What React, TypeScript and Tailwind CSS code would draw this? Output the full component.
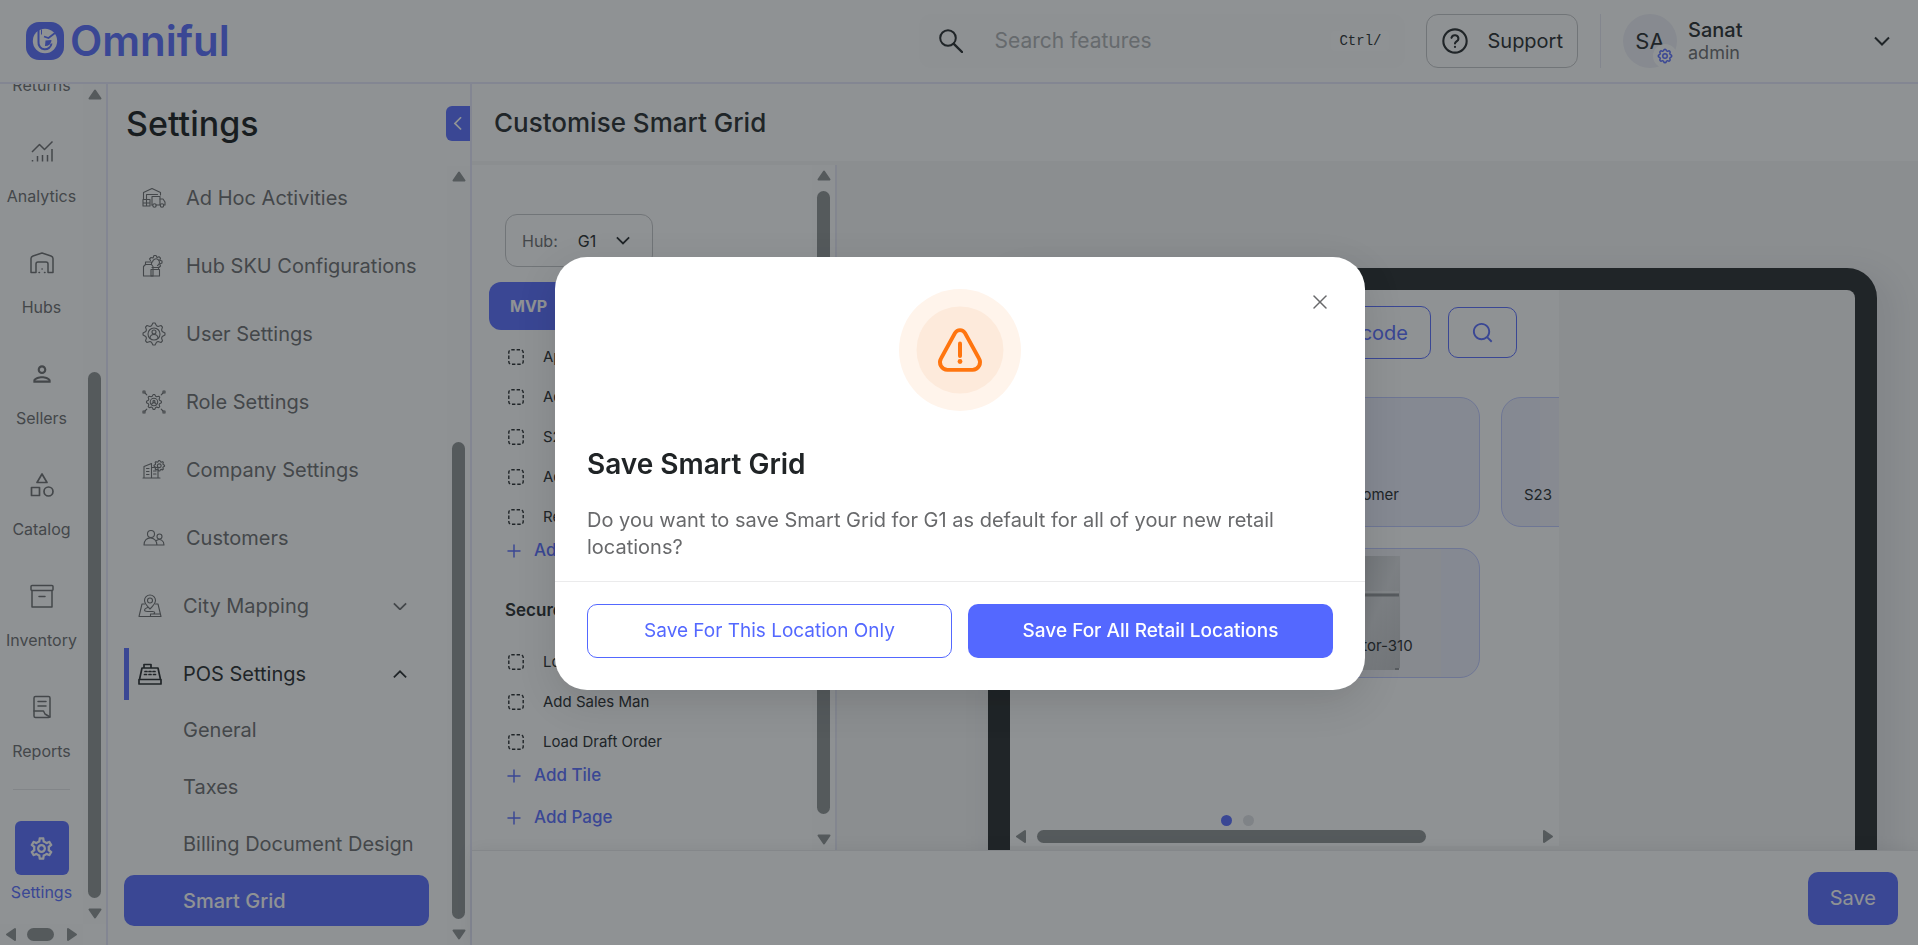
import React, { useState } from 'react';
import clsx from 'clsx';
import { FiX } from 'react-icons/fi';
import { MdOutlinePerson, MdOutlineSettings } from 'react-icons/md';
import { RiSearchLine } from 'react-icons/ri';
import { TbSettings } from 'react-icons/tb';

type IconProps = { className?: string };

const Svg: React.FC<IconProps & { children: React.ReactNode; width?: number }> = ({ className, children, width = 1.5 }) => (
  <svg
    viewBox="0 0 24 24"
    fill="none"
    stroke="currentColor"
    strokeWidth={width}
    strokeLinecap="round"
    strokeLinejoin="round"
    className={clsx('shrink-0', className)}
    aria-hidden="true"
  >
    {children}
  </svg>
);

const ChevronIcon: React.FC<IconProps> = ({ className }) => (
  <svg viewBox="0 0 16 10" fill="none" stroke="currentColor" strokeWidth="2" className={clsx('shrink-0', className)} aria-hidden="true">
    <path d="M1 1.5l7 7 7-7" />
  </svg>
);

/* toothed outline used by the small settings drawings */
const GEAR = Array.from({ length: 32 }, (_, i) => {
  const r = i % 4 < 2 ? 11 : 8.6;
  const a = ((i - 0.5) / 32) * Math.PI * 2 - Math.PI / 2;
  return `${(12 + r * Math.cos(a)).toFixed(2)},${(12 + r * Math.sin(a)).toFixed(2)}`;
}).join(' ');

const AnalyticsIcon: React.FC<IconProps> = (props) => (
  <Svg {...props}>
    <path d="M2 12l7.500-7.500 5 5L22.500 1.500" strokeLinecap="butt" />
    <path d="M2.500 20v1.500M7.500 16v5.500M12.500 15v6.500M17.500 15v6.500M22 9v12.500" strokeLinecap="butt" />
  </Svg>
);

const HubsIcon: React.FC<IconProps> = (props) => (
  <Svg {...props}>
    <path d="M1 21.500V7.500c0-1.500.8-2 2-2.500l9-3 9 3c1.200.5 2 1 2 2.500v14h-5V13a2 2 0 0 0-2-2H8a2 2 0 0 0-2 2v8.500z" />
    <path d="M9 21.500h.5M12 18h.2M14.500 21.500h.5" />
  </Svg>
);

const CatalogIcon: React.FC<IconProps> = (props) => (
  <Svg {...props} width={1.7}>
    <path d="M12 1L7 9.500h10z" />
    <rect x="1.500" y="14.500" width="8" height="8" />
    <circle cx="18.500" cy="18.500" r="4.500" />
  </Svg>
);

const InventoryIcon: React.FC<IconProps> = (props) => (
  <Svg {...props}>
    <rect x="1" y="1.500" width="22" height="5" rx="1" />
    <path d="M2 6.500V23h20V6.500M9 12.500h6" />
  </Svg>
);

const ReportsIcon: React.FC<IconProps> = (props) => (
  <Svg {...props}>
    <rect x="4" y="1.500" width="16" height="21" rx="1.500" />
    <path d="M8 6.500h8M8 11h8M4 16h9.500l1.500 3 5 3" />
  </Svg>
);

const AdHocIcon: React.FC<IconProps> = (props) => (
  <Svg {...props} width={1.1}>
    <path d="M1.500 13V6.500L10 2.500l8.500 4V9M4.500 13V8.500h11" />
    <path d="M1 13.500h7V20H1zM1 17h7M4.500 13.500V20M10 10.500h8v8.500h-4M10 10.500V19" />
    <path d="M18 13h3l2 3v3h-1.500M10 19h.5" />
    <circle cx="12.500" cy="19.500" r="1.700" />
    <circle cx="20" cy="19.500" r="1.700" />
  </Svg>
);

const HubSkuIcon: React.FC<IconProps> = (props) => (
  <Svg {...props} width={1.1}>
    <path d="M3.500 8h6v2.500l1.500 2V22H1.500V12.500l2-2zM3.500 10.500h6" />
    <path d="M9 15.500h8.500V22H9zM10 13.500h6.500v2" />
    <path d="M8.500 6.500l-1-1.500 1.500-1.500 2 .5 1-2.500h2l1 2 2-.8 1.500 1.500-.8 2 2.300.8v2l-2.300 1 .8 2-1.500 1.500-1-.3" />
    <path d="M10.500 8a3.500 3.500 0 1 1 5 3.500" />
  </Svg>
);

const UserSettingsIcon: React.FC<IconProps> = (props) => (
  <Svg {...props} width={1.1}>
    <polygon points={GEAR} />
    <circle cx="12" cy="12" r="6" />
    <circle cx="12" cy="10" r="2" />
    <path d="M8 16.300c.3-5 7.700-5 8 0" />
  </Svg>
);

const RoleSettingsIcon: React.FC<IconProps> = (props) => (
  <Svg {...props} width={1.1}>
    <g transform="translate(3.800 3.800) scale(.68)" strokeWidth="1.600">
      <polygon points={GEAR} />
      <circle cx="12" cy="12" r="5.500" />
      <circle cx="12" cy="11" r="1.500" />
      <path d="M8.500 16c.3-4 6.700-4 7 0" />
    </g>
    <path d="M3 3l1.800 1.800M21 3l-1.800 1.800M3 21l1.800-1.800M21 21l-1.800-1.800" />
    <path d="M1 1h2v2H1zM21 1h2v2h-2zM1 21h2v2H1zM21 21h2v2h-2z" />
  </Svg>
);

const CompanyIcon: React.FC<IconProps> = (props) => (
  <Svg {...props} width={1.1}>
    <path d="M1 20h17M2 20V8.500l7.500-3V20M9.500 9.500H16V20" />
    <path d="M4.500 10.500h2.500M4.500 13.500h2.500M4.500 16.500h2.500M11.500 13h2.500M11.500 16h2.500" />
    <g transform="translate(11.500 2) scale(.48)" strokeWidth="2.400">
      <polygon points={GEAR} />
      <circle cx="12" cy="12" r="4" />
    </g>
  </Svg>
);

const CustomersIcon: React.FC<IconProps> = (props) => (
  <Svg {...props} width={1.1}>
    <circle cx="9" cy="8" r="3.500" />
    <circle cx="17.500" cy="10.500" r="2.500" />
    <path d="M2 19c0-9.500 12.500-9.500 13 0zM14.500 14.500c3.500-2.500 7.500 0 7.500 4.500h-7" />
  </Svg>
);

const CityMappingIcon: React.FC<IconProps> = (props) => (
  <Svg {...props} width={1.1}>
    <path d="M12 15c-3.500-3.500-5.500-6-5.500-8.500a5.500 5.500 0 0 1 11 0c0 2.500-2 5-5.500 8.500z" />
    <circle cx="12" cy="6.500" r="2.500" />
    <path d="M6.500 10H4L1 22.500h22L20 10h-2.500M9.500 13.500c-4 1.500-4 4 0 4h5c3 0 3 2.500 0 2.500h-2v2.500M16 20h6" />
  </Svg>
);

const PosIcon: React.FC<IconProps> = (props) => (
  <Svg {...props} width={1.7}>
    <path d="M1 17.500h22V22H1zM1.500 17.500L4 6h16l2.500 11.500M6 6V2.500h7V6" />
    <path d="M7 9.500h2M11 9.500h2M15 9.500h2M6.500 12.500h2M11 12.500h2M15.500 12.500h2" />
  </Svg>
);

const TileIcon: React.FC = () => (
  <svg viewBox="0 0 16 16" fill="none" stroke="currentColor" strokeWidth="1.400" className="size-4 shrink-0" aria-hidden="true">
    <rect x=".8" y=".8" width="14.400" height="14.400" rx="2.500" strokeDasharray="3.400 1.900" />
  </svg>
);

const LogoMark: React.FC = () => (
  <svg viewBox="0 0 38 38" className="size-[38px]" aria-hidden="true">
    <rect width="38" height="38" rx="13" fill="#5468ff" />
    <circle cx="19" cy="19" r="12.200" fill="#fff" />
    <path d="M12.500 8v12a6.500 6.500 0 0 0 13 1.500" fill="none" stroke="#5468ff" strokeWidth="2" />
    <path d="M18 14.500l4.500 1.500 6.500-5" fill="none" stroke="#5468ff" strokeWidth="1.800" />
    <path d="M19.500 18.500l6-.5a6 6 0 0 1-6.500 6z" fill="#5468ff" />
    <path d="M15.500 7.500v5" stroke="#5468ff" strokeWidth="1" />
  </svg>
);

const Arrow: React.FC<IconProps> = ({ className }) => (
  <svg viewBox="0 0 14 11" fill="#8a8e8f" stroke="#8a8e8f" strokeWidth="2" strokeLinejoin="round" className={clsx('h-[11px] w-3.5 shrink-0', className)} aria-hidden="true">
    <path d="M7 1.500L12.500 9.500h-11z" />
  </svg>
);

const VerticalScrollbar: React.FC<{ thumb: string }> = ({ thumb }) => (
  <div className="flex w-[23px] shrink-0 flex-col items-center bg-[#fdfdfd] py-[5px]" aria-hidden="true">
    <Arrow />
    <div className={clsx('w-[13px] flex-1 rounded-full bg-[#8a8e8f]', thumb)} />
    <Arrow className="rotate-180" />
  </div>
);

const railItems = [
  { name: 'Returns', icon: ReportsIcon },
  { name: 'Analytics', icon: AnalyticsIcon },
  { name: 'Hubs', icon: HubsIcon },
  { name: 'Sellers', icon: MdOutlinePerson, size: 'size-[26px]' },
  { name: 'Catalog', icon: CatalogIcon },
  { name: 'Inventory', icon: InventoryIcon },
  { name: 'Reports', icon: ReportsIcon },
];

const settingsItems = [
  { name: 'Ad Hoc Activities', icon: AdHocIcon },
  { name: 'Hub SKU Configurations', icon: HubSkuIcon },
  { name: 'User Settings', icon: UserSettingsIcon },
  { name: 'Role Settings', icon: RoleSettingsIcon },
  { name: 'Company Settings', icon: CompanyIcon },
  { name: 'Customers', icon: CustomersIcon },
];

const posItems = ['General', 'Taxes', 'Billing Document Design', 'Smart Grid'];

const pages = [
  { name: 'MVP', tiles: ['Apply Discount', 'Add Customer', 'S23', 'Add Note', 'Refrigerator-310'] },
  { name: 'Secure', tiles: ['Lock Screen', 'Add Sales Man', 'Load Draft Order'] },
];

const Header: React.FC = () => (
  <header className="flex h-[84px] shrink-0 items-center border-b-2 border-[#e6e7fa] pr-7 pl-[26px]">
    <a href="#home" className="flex items-center gap-1.5 text-[42px] leading-[46px] font-semibold text-[#5468ff]">
      <LogoMark />
      <span>Omniful</span>
    </a>

    <div className="ml-auto flex h-[54px] w-[486px] items-center rounded-xl bg-[#fcfcfd] pr-4 pl-5">
      <Svg className="size-6" width={2}>
        <circle cx="9" cy="9" r="7.800" />
        <path d="M14.800 14.800L23 23" strokeWidth="2.400" />
      </Svg>
      <input
        type="text"
        aria-label="Search features"
        placeholder="Search features"
        className="ml-[31px] min-w-0 flex-1 bg-transparent text-[21px] outline-none placeholder:text-[#adaeb0]"
      />
      <kbd className="rounded bg-white px-2 font-['Liberation_Mono',monospace] text-sm">Ctrl/</kbd>
    </div>

    <button type="button" className="ml-[21px] flex h-[54px] items-center gap-[18px] rounded-xl border border-[#c3c4c6] px-3.5 text-xl">
      <Svg className="size-7" width={1.8}>
        <circle cx="12" cy="12" r="10" />
        <path d="M9 9.300a3 3 0 0 1 5.900.9c0 2-2.900 2.300-2.900 4M12 17v.1" />
      </Svg>
      Support
    </button>

    <div className="ml-[22px] h-[54px] w-px bg-[#e6e7f2]" />

    <button type="button" className="ml-[22px] flex w-[267px] items-center text-left" aria-label="Account menu">
      <span className="relative flex size-[54px] items-center justify-center rounded-full bg-[#eeeff6] text-[22px]">
        SA
        <span className="absolute right-0 bottom-0 flex size-6 items-center justify-center rounded-full bg-white text-[#5468ff]">
          <TbSettings className="size-[18px]" />
        </span>
      </span>
      <span className="ml-[11px] flex flex-col">
        <span className="text-xl leading-6 font-medium">Sanat</span>
        <span className="text-lg leading-[22px] text-[#68696b]">admin</span>
      </span>
      <ChevronIcon className="ml-auto w-4" />
    </button>
  </header>
);

const Rail: React.FC = () => (
  <nav className="flex w-[108px] shrink-0 border-r-2 border-[#e6e7fa]" aria-label="Main">
    <div className="flex w-[83px] flex-col">
      <div className="min-h-0 flex-1 overflow-hidden text-center text-base leading-6 text-[#68696b]">
        <div className="-mt-[70px] flex flex-col gap-7">
          {railItems.map(({ name, icon: Icon, size }) => (
            <a key={name} href={`#${name}`} className="flex flex-col items-center gap-[5px]">
              <span className="flex h-[54px] items-center">
                <Icon className={size ?? 'size-6'} />
              </span>
              {name}
            </a>
          ))}
        </div>
        <hr className="mx-[13px] mt-[26px] mb-[31px] border-[#e4e4e6]" />
        <a href="#settings" className="flex flex-col items-center gap-[5px] text-[#5468ff]">
          <span className="flex size-[54px] items-center justify-center rounded-md bg-[#5468ff] text-white">
            <MdOutlineSettings className="size-[27px]" />
          </span>
          Settings
        </a>
      </div>
      <div className="flex h-[21px] shrink-0 items-center bg-[#fdfdfd] px-1" aria-hidden="true">
        <Arrow className="-rotate-90" />
        <div className="ml-[9px] h-[13px] w-[27px] rounded-full bg-[#8a8e8f]" />
        <Arrow className="ml-auto rotate-90" />
      </div>
    </div>
    <div className="flex pb-[21px]">
      <VerticalScrollbar thumb="mt-[272px] mb-[10px]" />
    </div>
  </nav>
);

const SettingsMenu: React.FC = () => (
  <aside className="flex w-[364px] shrink-0 flex-col border-r-2 border-[#e6e7fa]">
    <div className="flex h-[79px] shrink-0 items-center justify-between pl-[18px]">
      <h1 className="text-[34px] leading-10 font-medium text-[#111416]">Settings</h1>
      <button type="button" aria-label="Collapse menu" className="flex h-[35px] w-6 items-center justify-center rounded-l-md bg-[#5468ff] text-white">
        <ChevronIcon className="w-3.5 rotate-90" />
      </button>
    </div>
    <div className="flex min-h-0 flex-1 pt-[3px]">
      <nav className="min-w-0 flex-1 overflow-hidden pt-1.5 pr-[18px] pl-4 text-xl text-[#68696b]" aria-label="Settings">
        <ul className="flex flex-col gap-4">
          {settingsItems.map(({ name, icon: Icon }) => (
            <li key={name}>
              <a href={`#${name}`} className="flex h-[52px] items-center gap-5 pl-[18px] whitespace-nowrap">
                <Icon className="size-6" />
                {name}
              </a>
            </li>
          ))}
          <li>
            <button type="button" className="flex h-[52px] w-full items-center gap-[21px] pr-[22px] pl-3.5">
              <CityMappingIcon className="size-6" />
              City Mapping
              <ChevronIcon className="ml-auto w-3.5" />
            </button>
          </li>
          <li>
            <button type="button" className="flex h-[52px] w-full items-center gap-[21px] border-l-[5px] border-[#5468ff] pr-[22px] pl-[9px] text-[#202426]">
              <PosIcon className="size-6" />
              POS Settings
              <ChevronIcon className="ml-auto w-3.5 rotate-180" />
            </button>
            <ul className="mt-1 flex flex-col gap-1.5">
              {posItems.map((name) => (
                <li key={name}>
                  <a
                    href={`#${name}`}
                    className={clsx(
                      'flex h-[51px] items-center rounded-[10px] pl-[59px] whitespace-nowrap',
                      name === 'Smart Grid' && 'bg-[#5468ff] font-medium text-white'
                    )}
                  >
                    {name}
                  </a>
                </li>
              ))}
            </ul>
          </li>
        </ul>
      </nav>
      <VerticalScrollbar thumb="mt-[260px] mb-[10px]" />
    </div>
  </aside>
);

const AddButton: React.FC<{ children: React.ReactNode }> = ({ children }) => (
  <button type="button" className="flex h-7 items-center gap-3 pl-[17px] text-[17px] font-medium text-[#5468ff]">
    <Svg className="size-4">
      <path d="M12 3v18M3 12h18" strokeWidth="2.200" />
    </Svg>
    {children}
  </button>
);

const GridPanel: React.FC = () => {
  const [hub, setHub] = useState('G1');

  return (
    <div className="flex w-[365px] shrink-0 border-r-2 border-[#e6e7f5] bg-white">
      <div className="min-w-0 flex-1 overflow-hidden pt-[49px] pr-6 pl-[17px]">
        <div className="relative ml-4 flex h-[53px] w-[148px] items-center rounded-xl border border-[#c3c4c6] pl-4 text-base">
          <label htmlFor="hub" className="text-[#68696b]">Hub:</label>
          <select id="hub" value={hub} onChange={(e) => setHub(e.target.value)} className="ml-5 flex-1 appearance-none bg-transparent outline-none">
            <option>G1</option>
          </select>
          <ChevronIcon className="pointer-events-none absolute right-[22px] w-3.5" />
        </div>

        {pages.map(({ name, tiles }, index) => (
          <section key={name} className={index === 0 ? 'mt-[15px]' : 'mt-[22px]'}>
            {index === 0 ? (
              <h3 className="mb-[7px] flex h-12 items-center rounded-xl bg-[#5468ff] pl-[21px] text-base font-bold text-white">{name}</h3>
            ) : (
              <h3 className="mb-[7px] flex h-12 items-center pl-4 text-[17px] font-semibold">{name}</h3>
            )}
            <ul className="text-[15px]">
              {tiles.map((tile) => (
                <li key={tile} className="flex h-10 items-center gap-[19px] pl-[19px]">
                  <TileIcon />
                  {tile}
                </li>
              ))}
            </ul>
            <AddButton>Add Tile</AddButton>
          </section>
        ))}
        <div className="mt-3.5">
          <AddButton>Add Page</AddButton>
        </div>
      </div>
      <VerticalScrollbar thumb="mt-[10px] mb-5" />
    </div>
  );
};

const FridgeImage: React.FC = () => (
  <svg viewBox="0 0 128 128" className="absolute inset-0 m-auto size-32" aria-hidden="true">
    <defs>
      <linearGradient id="fridge" x1="0" y1="0" x2="1" y2="1">
        <stop offset="0" stopColor="#bfc1c4" />
        <stop offset=".5" stopColor="#dcdde0" />
        <stop offset="1" stopColor="#c2c3c6" />
      </linearGradient>
    </defs>
    <rect width="128" height="128" fill="#eeeef4" />
    <path d="M40 7h47v112l-4 2H40z" fill="url(#fridge)" />
    <path d="M40 46h46" stroke="#8f9194" strokeWidth="3" />
    <path d="M40 43h46" stroke="#eeeff0" strokeWidth="1" />
    <path d="M82 119h4v2h-4z" fill="#8f9194" />
  </svg>
);

const Tile: React.FC<{ name: string }> = ({ name }) => (
  <div className="relative flex h-[130px] items-end overflow-hidden rounded-[20px] border border-[#bcc6ff] bg-[#ebedfb] px-[22px] pb-5 text-[15px]">
    {name === 'Refrigerator-310' && <FridgeImage />}
    {name === 'S23' && <div className="absolute inset-0 m-auto w-32 bg-[#eeeff8]" />}
    <span className="relative">{name}</span>
  </div>
);

const TabletPreview: React.FC = () => (
  <div className="min-w-0 flex-1 overflow-hidden pt-[103px] pr-[41px] pl-[151px]">
    <div className="flex h-[640px] rounded-[30px] border-22 border-[#202426] bg-[#202426] shadow-[10px_10px_30px_8px_rgba(33,37,80,0.08)]">
      <div className="flex flex-1 overflow-hidden rounded-lg bg-[#f6f6f6]">
        <div className="flex h-[556px] w-[549px] flex-col overflow-hidden bg-white">
          <div className="flex items-center justify-end gap-[17px] pt-4 pr-[42px] text-xl text-[#5468ff]">
            <button type="button" className="h-[53px] rounded-[10px] border border-[#5468ff] px-[22px]">Scan Barcode</button>
            <button type="button" aria-label="Search" className="flex h-[51px] w-[69px] items-center justify-center rounded-[10px] border border-[#5468ff]">
              <RiSearchLine className="size-[23px]" />
            </button>
          </div>
          <div className="mt-[38px] grid w-[660px] shrink-0 grid-cols-[repeat(3,206px)] gap-[21px] pl-[37px]">
            {pages[0].tiles.map((tile) => (
              <Tile key={tile} name={tile} />
            ))}
          </div>
          <div className="mt-auto flex gap-[11px] pl-[211px]">
            <span className="size-[11px] rounded-full bg-[#5468ff]" />
            <span className="size-[11px] rounded-full bg-[#dfe0e4]" />
          </div>
          <div className="flex h-5 shrink-0 items-center px-1" aria-hidden="true">
            <Arrow className="-rotate-90" />
            <div className="ml-[9px] h-[13px] w-[389px] rounded-full bg-[#8a8e8f]" />
            <Arrow className="ml-auto rotate-90" />
          </div>
        </div>
      </div>
    </div>
  </div>
);

const SaveDialog: React.FC<{ onClose: () => void }> = ({ onClose }) => (
  <div className="fixed inset-0 z-50 flex items-center justify-center bg-[#20262a]/50 pt-0.5 pl-0.5">
    <div role="dialog" aria-modal="true" aria-labelledby="dialog-title" className="relative w-[810px] max-w-full rounded-4xl bg-white shadow-[0_12px_40px_rgba(0,0,0,0.12)]">
      <button type="button" onClick={onClose} aria-label="Close" className="absolute top-[33px] right-[33px] text-[#68696b]">
        <FiX className="size-6" strokeWidth={1.5} />
      </button>
      <div className="px-8 pt-8 pb-5">
        <svg viewBox="0 0 122 122" className="mx-auto size-[122px]" aria-hidden="true">
          <circle cx="61" cy="61" r="61" fill="#fff4eb" />
          <circle cx="61" cy="61" r="43.500" fill="#fdeadb" />
          <path
            d="M56 44L42 69.500a7.500 7.500 0 0 0 6.500 11.300h25a7.500 7.500 0 0 0 6.500-11.300L66 44a5.800 5.800 0 0 0-10 0z"
            fill="none"
            stroke="#ff750f"
            strokeWidth="3.800"
          />
          <path d="M61 54.500v12.500" stroke="#ff750f" strokeWidth="4" strokeLinecap="round" />
          <circle cx="61" cy="72.500" r="2.400" fill="#ff750f" />
        </svg>
        <h2 id="dialog-title" className="mt-9 text-[28px] leading-[34px] font-semibold">Save Smart Grid</h2>
        <p className="mt-[26px] text-xl leading-[27px] text-[#68696b]">
          Do you want to save Smart Grid for G1 as default for all of your new retail locations?
        </p>
      </div>
      <div className="grid grid-cols-2 gap-4 border-t border-[#ebebec] px-8 pt-[22px] pb-8 text-[19px]">
        <button type="button" onClick={onClose} className="h-[54px] rounded-[10px] border border-[#5468ff] text-[#5468ff]">
          Save For This Location Only
        </button>
        <button type="button" onClick={onClose} className="h-[54px] rounded-[10px] bg-[#5468ff] font-medium text-white">
          Save For All Retail Locations
        </button>
      </div>
    </div>
  </div>
);

const App: React.FC = () => {
  const [isDialogOpen, setIsDialogOpen] = useState(true);

  return (
    <div className="flex h-screen flex-col overflow-hidden bg-white font-['Inter',sans-serif] text-[#202426]">
      <Header />
      <div className="flex min-h-0 flex-1">
        <Rail />
        <SettingsMenu />
        <main className="flex min-w-0 flex-1 flex-col">
          <div className="flex h-[77px] shrink-0 items-center px-[22px]">
            <h2 className="text-[26px] font-medium">Customise Smart Grid</h2>
          </div>
          <div className="flex min-h-0 flex-1 bg-[#f6f6f6] pt-1">
            <GridPanel />
            <TabletPreview />
          </div>
          <footer className="relative flex h-[95px] shrink-0 items-center justify-end border-t border-[#e8e8ea] bg-white pr-5 shadow-[0_0_16px_rgba(0,0,0,0.08)]">
            <button type="button" onClick={() => setIsDialogOpen(true)} className="h-[53px] rounded-[10px] bg-[#5468ff] px-[22px] text-xl text-white">
              Save
            </button>
          </footer>
        </main>
      </div>
      {isDialogOpen && <SaveDialog onClose={() => setIsDialogOpen(false)} />}
    </div>
  );
};

export default App;
